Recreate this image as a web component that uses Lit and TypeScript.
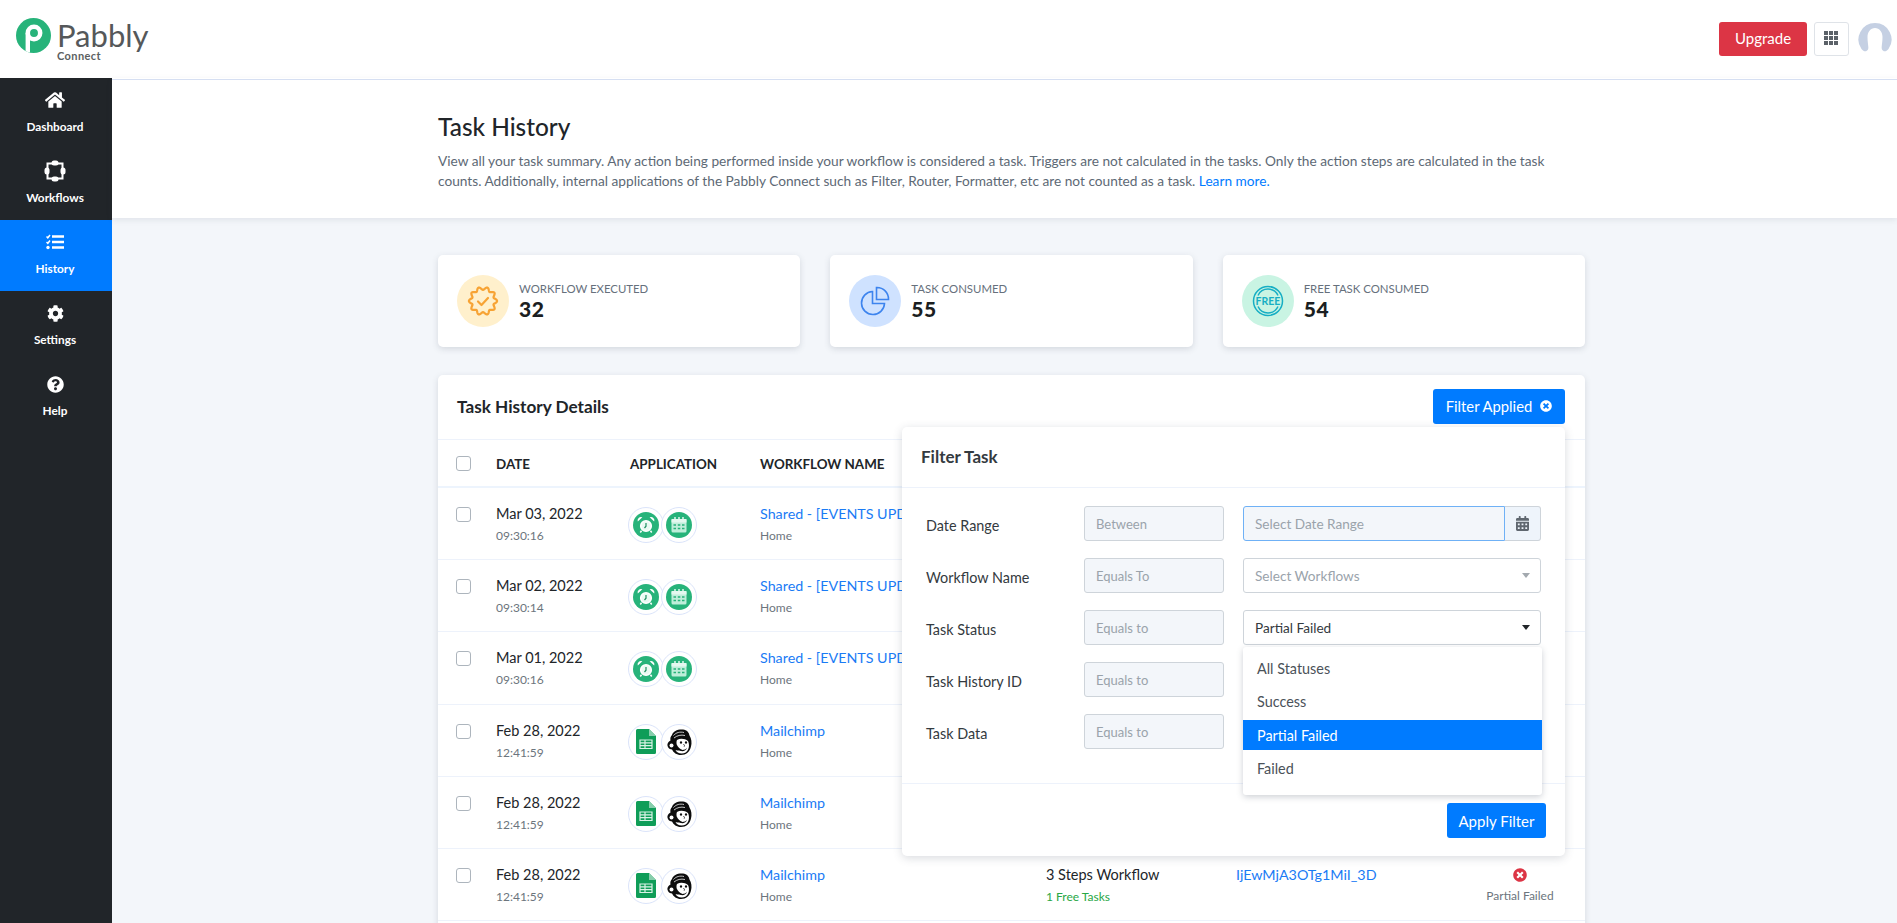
import { LitElement, html, css, svg } from 'lit';
import { customElement } from 'lit/decorators.js';

// font awesome style glyphs
const HOME = 'M280.37 148.26L96 300.11V464a16 16 0 0 0 16 16l112.06-.29a16 16 0 0 0 15.92-16V368a16 16 0 0 1 16-16h64a16 16 0 0 1 16 16v95.64a16 16 0 0 0 16 16.05L464 480a16 16 0 0 0 16-16V300L295.67 148.26a12.19 12.19 0 0 0-15.3 0zM571.6 251.47L488 182.56V44.05a12 12 0 0 0-12-12h-56a12 12 0 0 0-12 12v72.61L318.47 43a48 48 0 0 0-61 0L4.34 251.47a12 12 0 0 0-1.6 16.9l25.5 31A12 12 0 0 0 45.15 301l235.22-193.74a12.19 12.19 0 0 1 15.3 0L530.9 301a12 12 0 0 0 16.9-1.6l25.5-31a12 12 0 0 0-1.7-16.93z';
const COG = 'M487.4 315.7l-42.6-24.6c4.3-23.2 4.3-47 0-70.2l42.6-24.6c4.9-2.8 7.1-8.6 5.5-14-11.1-35.6-30-67.8-54.7-94.6-3.8-4.1-10-5.1-14.8-2.3L380.8 110c-17.9-15.4-38.5-27.3-60.8-35.1V25.8c0-5.6-3.9-10.5-9.4-11.7-36.7-8.2-74.3-7.8-109.2 0-5.5 1.2-9.4 6.1-9.4 11.7V75c-22.2 7.9-42.8 19.8-60.8 35.1L88.7 85.5c-4.9-2.8-11-1.9-14.8 2.3-24.7 26.7-43.6 58.9-54.7 94.6-1.7 5.4.6 11.2 5.5 14L67.3 221c-4.3 23.2-4.3 47 0 70.2l-42.6 24.6c-4.9 2.8-7.1 8.6-5.5 14 11.1 35.6 30 67.8 54.7 94.6 3.8 4.1 10 5.1 14.8 2.3l42.6-24.6c17.9 15.4 38.5 27.3 60.8 35.1v49.2c0 5.6 3.9 10.5 9.4 11.7 36.7 8.2 74.3 7.8 109.2 0 5.5-1.2 9.4-6.1 9.4-11.7v-49.2c22.2-7.9 42.8-19.8 60.8-35.1l42.6 24.6c4.9 2.8 11 1.9 14.8-2.3 24.7-26.7 43.6-58.9 54.7-94.6 1.5-5.5-.7-11.3-5.6-14.1zM256 336c-44.1 0-80-35.9-80-80s35.9-80 80-80 80 35.9 80 80-35.9 80-80 80z';
const QUESTION = 'M504 256c0 136.997-111.043 248-248 248S8 392.997 8 256C8 119.083 119.043 8 256 8s248 111.083 248 248zM262.655 90c-54.497 0-89.255 22.957-116.549 63.758-3.536 5.286-2.353 12.415 2.715 16.258l34.699 26.31c5.205 3.947 12.621 3.008 16.665-2.122 17.864-22.658 30.113-35.797 57.303-35.797 20.429 0 45.698 13.148 45.698 32.958 0 14.976-12.363 22.667-32.534 33.976C247.128 238.528 216 254.941 216 296v4c0 6.627 5.373 12 12 12h56c6.627 0 12-5.373 12-12v-1.333c0-28.462 83.186-29.647 83.186-106.667 0-58.002-60.165-102-116.531-102zM256 338c-25.365 0-46 20.635-46 46 0 25.364 20.635 46 46 46s46-20.636 46-46c0-25.365-20.635-46-46-46z';
const TIMES = 'M256 8C119 8 8 119 8 256s111 248 248 248 248-111 248-248S393 8 256 8zm121.6 313.1c4.7 4.7 4.7 12.3 0 17L338 377.6c-4.7 4.7-12.3 4.7-17 0L256 312l-65.1 65.6c-4.7 4.7-12.3 4.7-17 0L134.4 338c-4.7-4.7-4.7-12.3 0-17l65.6-65-65.6-65.1c-4.7-4.7-4.7-12.3 0-17l39.6-39.6c4.7-4.7 12.3-4.7 17 0l65 65.7 65.1-65.6c4.7-4.7 12.3-4.7 17 0l39.6 39.6c4.7 4.7 4.7 12.3 0 17L312 256l65.6 65.1z';
const CALENDAR = 'M0 464c0 26.5 21.5 48 48 48h352c26.5 0 48-21.5 48-48V192H0v272zm320-196c0-6.6 5.4-12 12-12h40c6.6 0 12 5.4 12 12v40c0 6.6-5.4 12-12 12h-40c-6.6 0-12-5.4-12-12v-40zm0 128c0-6.6 5.4-12 12-12h40c6.6 0 12 5.4 12 12v40c0 6.6-5.4 12-12 12h-40c-6.6 0-12-5.4-12-12v-40zM192 268c0-6.6 5.4-12 12-12h40c6.6 0 12 5.4 12 12v40c0 6.6-5.4 12-12 12h-40c-6.6 0-12-5.4-12-12v-40zm0 128c0-6.6 5.4-12 12-12h40c6.6 0 12 5.4 12 12v40c0 6.6-5.4 12-12 12h-40c-6.6 0-12-5.4-12-12v-40zM64 268c0-6.6 5.4-12 12-12h40c6.6 0 12 5.4 12 12v40c0 6.6-5.4 12-12 12H76c-6.6 0-12-5.4-12-12v-40zm0 128c0-6.6 5.4-12 12-12h40c6.6 0 12 5.4 12 12v40c0 6.6-5.4 12-12 12H76c-6.6 0-12-5.4-12-12v-40zM400 64h-48V16c0-8.8-7.2-16-16-16h-32c-8.8 0-16 7.2-16 16v48H160V16c0-8.8-7.2-16-16-16h-32c-8.8 0-16 7.2-16 16v48H48C21.5 64 0 85.5 0 112v48h448v-48c0-26.5-21.5-48-48-48z';

const navIcon = (name: string) => {
  if (name === 'Dashboard') return html`<svg width="20" height="18" viewBox="0 0 576 512" fill="#fff"><path d=${HOME}></path></svg>`;
  if (name === 'Workflows') return html`<svg width="22" height="22" viewBox="0 0 22 22"><rect x="3.500" y="3.500" width="15" height="15" fill="none" stroke="#fff" stroke-width="2"></rect><rect x="7.500" y="0.500" width="7" height="5" rx="2.500" fill="#fff"></rect><rect x="7.500" y="16.500" width="7" height="5" rx="2.500" fill="#fff"></rect><rect x="0.500" y="7.500" width="5" height="7" rx="2.500" fill="#fff"></rect><rect x="16.500" y="7.500" width="5" height="7" rx="2.500" fill="#fff"></rect></svg>`;
  if (name === 'History') return html`<svg width="18" height="16" viewBox="0 0 18 16" fill="none" stroke="#fff"><path d="M6 2.500h12M6 8h12M6 13.500h12" stroke-width="2.400"></path><path d="M0.500 2.500l1.300 1.300L4 1M0.500 8l1.300 1.300L4 6.500" stroke-width="1.500"></path><circle cx="2" cy="13.500" r="1.700" fill="#fff" stroke="none"></circle></svg>`;
  if (name === 'Settings') return html`<svg width="17" height="17" viewBox="0 0 512 512" fill="#fff"><path d=${COG}></path></svg>`;
  return html`<svg width="17" height="17" viewBox="0 0 512 512" fill="#fff"><path d=${QUESTION}></path></svg>`;
};

const alarmIcon = html`<span class="app-green"><svg width="20" height="20" viewBox="0 0 20 20" fill="none"><circle cx="10" cy="11" r="5.300" fill="#eafaf3" stroke="#fff" stroke-width="1.600"></circle><path d="M10 8v3.200l-1.500 1.800" stroke="#1f8f62" stroke-width="1.200"></path><path d="M1.800 6.600A3.400 3.400 0 0 1 6.400 2.300zM18.200 6.600a3.400 3.400 0 0 0-4.600-4.300z" fill="#fff"></path><path d="M5.500 15.800l-1.200 1.700M14.500 15.800l1.200 1.700" stroke="#fff" stroke-width="1.500"></path></svg></span>`;
const calIcon = html`<span class="app-green"><svg width="18" height="18" viewBox="0 0 18 18"><rect x="1.500" y="3" width="15" height="13.500" rx="1.500" fill="#bfeeda"></rect><rect x="1.500" y="3" width="15" height="3.500" fill="#e4f8ef"></rect><path d="M5 1v3.500M9 1v3.500M13 1v3.500" stroke="#e4f8ef" stroke-width="1.500"></path><path d="M3.500 9h2.500M7.800 9h2.500M12 9h2.500M3.500 12.500h2.500M7.800 12.500h2.500M12 12.500h2.500" stroke="#27b37a" stroke-width="1.700"></path></svg></span>`;
const sheetsIcon = html`<svg width="20" height="25" viewBox="0 0 20 25"><path d="M1.500 0H13l7 7v16.500a1.500 1.500 0 0 1-1.500 1.500h-17A1.500 1.500 0 0 1 0 23.500v-22A1.500 1.500 0 0 1 1.500 0z" fill="#0f9d58"></path><path d="M13 0l7 7h-7z" fill="#87ceac"></path><path d="M4 11h12v8.500H4z M4 13.800h12 M4 16.700h12 M9 11v8.500" fill="none" stroke="#d9f2e5" stroke-width="1.200"></path></svg>`;
const chimpIcon = html`<svg width="25" height="26" viewBox="0 0 25 26"><path d="M5 6C6 2 11 0 16 .5c4 .5 6 3 6.500 6 2 3 2.500 7.500 1.500 11-1 5-5 8.500-10 8.500-4.500 0-7.500-2.500-9-5.500-3 0-5-3-4.500-5.500C1 13 2.500 12 3.500 11.500 3 9.500 3.500 7.500 5 6z" fill="#0d0d0d"></path><path d="M6.500 6.500C9 3.500 13 2.500 17 3.500M7 9c3-2.500 7-3.500 11-2.500" stroke="#f3f3f3" stroke-width=".8" fill="none"></path><path d="M10 11c3-1.800 8-1.500 11 1 1.300 2.500 1.300 6 .3 8-1 3-3.700 4.500-6.800 4.500-2.800 0-5-1.500-6-3.500 2 .8 5 .8 7 0-2-.8-5-3-5.800-5.500-.3-1.700-.3-3.200.3-4.500z" fill="#fff"></path><ellipse cx="14" cy="13.500" rx="1.100" ry="1.300" fill="#0d0d0d"></ellipse><ellipse cx="19" cy="13.500" rx="1.100" ry="1.300" fill="#0d0d0d"></ellipse><path d="M11.500 20c3 1.500 6.500 1.300 8.500-1.200-1 3.700-6.500 4.700-8.500 1.200z" fill="#0d0d0d"></path><path d="M16.300 15c1 1 1.700 1.800.8 2.700" stroke="#0d0d0d" fill="none" stroke-width=".8"></path><circle cx="4.500" cy="16.500" r="2" fill="#fff"></circle></svg>`;

// the wavy badge on the first stat card
const badgePath = () => {
  const pts: string[] = [];
  for (let i = 0; i < 120; i++) {
    const a = (i / 120) * Math.PI * 2;
    const r = 12.6 + 1.5 * Math.cos(a * 10);
    pts.push(`${(16 + r * Math.cos(a)).toFixed(2)},${(16 + r * Math.sin(a)).toFixed(2)}`);
  }
  return `M${pts.join('L')}Z`;
};

const NAV = ['Dashboard', 'Workflows', 'History', 'Settings', 'Help'];

const ROWS = [
  { date: 'Mar 03, 2022', time: '09:30:16', name: 'Shared - [EVENTS UPDATE]', apps: 'sched' },
  { date: 'Mar 02, 2022', time: '09:30:14', name: 'Shared - [EVENTS UPDATE]', apps: 'sched' },
  { date: 'Mar 01, 2022', time: '09:30:16', name: 'Shared - [EVENTS UPDATE]', apps: 'sched' },
  { date: 'Feb 28, 2022', time: '12:41:59', name: 'Mailchimp', apps: 'chimp' },
  { date: 'Feb 28, 2022', time: '12:41:59', name: 'Mailchimp', apps: 'chimp' },
  { date: 'Feb 28, 2022', time: '12:41:59', name: 'Mailchimp', apps: 'chimp', steps: '3 Steps Workflow', free: '1 Free Tasks', id: 'IjEwMjA3OTg1MiI_3D', status: 'Partial Failed' },
];

const FIELDS = [
  { label: 'Date Range', op: 'Between' },
  { label: 'Workflow Name', op: 'Equals To' },
  { label: 'Task Status', op: 'Equals to' },
  { label: 'Task History ID', op: 'Equals to' },
  { label: 'Task Data', op: 'Equals to' },
];

@customElement('app-root')
export class AppRoot extends LitElement {
  static styles = css`
    :host {
      display: block;
      height: 923px;
      overflow: hidden;
      font-family: 'Lato', 'Liberation Sans', sans-serif;
      color: #212529;
      background: #f3f6fa;
    }
    * { box-sizing: border-box; }

    /* Top bar */
    .topbar {
      height: 78px;
      background: #fff;
      display: flex;
      align-items: center;
      justify-content: space-between;
      padding: 0 5px 1px 16px;
    }
    .logo { display: flex; align-items: flex-start; gap: 6px; }
    .logo-mark { margin-top: 1.5px; }
    .logo-words { display: flex; flex-direction: column; }
    .logo-name { font-size: 31px; line-height: 30px; margin-top: 3.5px; color: #55585a; }
    .logo-sub { font-size: 11px; font-weight: 700; line-height: 11px; margin-top: -0.5px; color: #5c5f61; letter-spacing: 0.4px; }
    .top-actions { display: flex; align-items: center; gap: 7px; }
    .upgrade {
      width: 88px;
      height: 34px;
      padding-bottom: 1px;
      border-radius: 3px;
      background: #dc3545;
      color: #fff;
      font-size: 15px;
      display: flex;
      align-items: center;
      justify-content: center;
    }
    .apps {
      width: 35px;
      height: 34px;
      border: 1px solid #dfe3e8;
      border-radius: 3px;
      display: flex;
      align-items: center;
      justify-content: center;
    }
    .avatar { margin-left: 2px; display: block; }

    .body { display: flex; height: 845px; }

    /* Sidebar */
    .sidebar { width: 112px; flex: none; background: #212529; }
    .nav-item {
      height: 71px;
      display: flex;
      flex-direction: column;
      align-items: center;
      color: #fff;
      font-size: 11.8px;
      font-weight: 700;
      padding: 11px 2px 0 0;
    }
    .nav-item.active { background: #007bff; }
    .nav-icon { height: 22px; display: flex; align-items: center; justify-content: center; }
    .nav-label { margin-top: 9px; line-height: 14px; }

    /* Main column */
    .main { flex: 1; min-width: 0; }
    .page-head {
      height: 140px;
      background: linear-gradient(#fff 1px, #d6dff2 1px, #d6dff2 2px, #fff 2px);
      box-shadow: 0 2px 6px rgba(60, 70, 90, 0.1);
      padding: 34px 0 0 326px;
    }
    h1 { margin: 0; font-size: 24.4px; font-weight: 500; line-height: 29px; color: #212529; }
    .page-head p {
      margin: 10px 0 0;
      width: 1147px;
      font-size: 13.7px;
      line-height: 20px;
      color: #5d6975;
    }
    .page-head a { color: #007bff; font-weight: 400; }
    .content { width: 1147px; margin-left: 326px; padding-top: 37px; }

    /* Stat cards */
    .stats { display: grid; grid-template-columns: repeat(3, 1fr); gap: 30px; }
    .stat {
      height: 92px;
      background: #fff;
      border-radius: 5px;
      box-shadow: 0 2px 6px rgba(60, 70, 90, 0.17);
      display: flex;
      align-items: center;
      gap: 10px;
      padding-left: 19px;
    }
    .stat-icon { width: 52px; height: 52px; border-radius: 50%; display: flex; align-items: center; justify-content: center; }
    .stat-title { font-size: 11.4px; line-height: 14px; color: #66707c; }
    .stat-value { font-size: 21px; font-weight: 900; line-height: 25px; letter-spacing: 0.6px; color: #1b1e21; }

    /* Table card, runs on past the bottom of the window */
    .card {
      position: relative;
      margin-top: 28px;
      min-height: 600px;
      background: #fff;
      border-radius: 5px;
      box-shadow: 0 2px 6px rgba(60, 70, 90, 0.17);
    }
    .card-head {
      height: 64px;
      display: flex;
      align-items: center;
      justify-content: space-between;
      padding: 0 20px 2px 19px;
    }
    h2 { margin: 0; font-size: 17.2px; font-weight: 700; color: #212529; }
    .filter-btn {
      height: 35px;
      width: 132px;
      border-radius: 3px;
      background: #007bff;
      color: #fff;
      font-size: 14.8px;
      display: flex;
      align-items: center;
      justify-content: center;
      gap: 8px;
    }
    .row {
      display: grid;
      grid-template-columns: 40px 134px 130px 286px 190px 241px 1fr;
      padding-left: 18px;
      height: 72.2px;
      border-bottom: 1px solid #edf2fb;
    }
    .row.head {
      height: 49px;
      padding-top: 1px;
      align-items: center;
      border-top: 1px solid #edf2fb;
      border-bottom: 2px solid #edf4fd;
      font-size: 13.4px;
      font-weight: 700;
      color: #212529;
    }
    .check { width: 15px; height: 15px; border: 1px solid #adb5bd; border-radius: 3px; background: #fff; }
    .row:not(.head) .check { margin-top: 19px; }
    .cell { padding-top: 16px; }
    .main-text { font-size: 14.5px; line-height: 20px; color: #212529; }
    .sub-text { font-size: 12px; line-height: 16px; margin-top: 4px; color: #6c757d; }
    .main-text.link { color: #1a7bf5; font-size: 14.3px; }
    .green { color: #28a745; }
    .app-icons { display: flex; margin: 3px 0 0 -2px; }
    .app-icon {
      width: 36px;
      height: 36px;
      border-radius: 50%;
      border: 1px solid #dbe4fa;
      background: #fff;
      display: flex;
      align-items: center;
      justify-content: center;
    }
    .app-icon + .app-icon { margin-left: -3px; }
    .app-green {
      width: 26px;
      height: 26px;
      border-radius: 50%;
      background: #27b37a;
      display: flex;
      align-items: center;
      justify-content: center;
    }
    .status { text-align: center; padding-top: 19px; width: 86px; }
    .status svg { display: block; margin: 0 auto 6px; }
    .status .sub-text { margin-top: 0; }

    /* Filter popover */
    .popover {
      position: absolute;
      top: 52px;
      right: 20px;
      width: 663px;
      height: 429px;
      background: #fff;
      border-radius: 5px;
      box-shadow: 0 2px 10px rgba(60, 70, 90, 0.2);
      z-index: 2;
    }
    .pop-head {
      height: 61px;
      padding: 0 19px 2px;
      display: flex;
      align-items: center;
      font-size: 17px;
      font-weight: 700;
      color: #343a40;
      border-bottom: 1px solid #edf2fb;
    }
    .pop-body {
      height: 296px;
      padding: 18px 0 0 24px;
      display: flex;
      flex-direction: column;
      gap: 17px;
      border-bottom: 1px solid #edf2fb;
    }
    .field { display: grid; grid-template-columns: 158px 140px 317px; height: 35px; align-items: center; }
    .field label { font-size: 14.4px; color: #343a40; padding-top: 3px; }
    .control {
      height: 35px;
      border: 1px solid #ced4da;
      border-radius: 3px;
      font-size: 13.6px;
      color: #9aa3ab;
      display: flex;
      align-items: center;
      padding-left: 11px;
      background: #fff;
    }
    .control.op { background: #f3f6fa; font-size: 13px; }
    .value { margin-left: 19px; justify-content: space-between; padding-right: 10px; }
    .value.picked { color: #343a40; }
    .date-group { margin-left: 19px; height: 35px; display: flex; }
    .date-input {
      flex: 1;
      display: flex;
      align-items: center;
      padding-left: 11px;
      font-size: 13.6px;
      color: #9aa3ab;
      background: #f3f6fa;
      border: 1px solid #6fb1f6;
      border-radius: 3px 0 0 3px;
    }
    .date-addon {
      width: 36px;
      display: flex;
      align-items: center;
      justify-content: center;
      background: #eef4fb;
      border: 1px solid #ced4da;
      border-left: 0;
      border-radius: 0 3px 3px 0;
    }
    .caret { width: 0; height: 0; border: 4.5px solid transparent; border-top: 5px solid #a3a9af; border-bottom: 0; }
    .caret.dark { border-top-color: #212529; }
    .pop-foot { display: flex; justify-content: flex-end; padding: 19px 19px 0 0; }
    .apply {
      width: 99px;
      height: 35px;
      border-radius: 3px;
      background: #007bff;
      color: #fff;
      font-size: 15px;
      display: flex;
      align-items: center;
      justify-content: center;
    }
    .menu {
      position: absolute;
      top: 220px;
      left: 341px;
      width: 299px;
      height: 148px;
      padding-top: 6px;
      background: #fff;
      border-radius: 3px;
      box-shadow: 0 2px 6px rgba(60, 70, 90, 0.25);
      display: flex;
      flex-direction: column;
      gap: 3.5px;
      z-index: 3;
    }
    .menu-item { height: 30px; padding-left: 14px; display: flex; align-items: center; font-size: 14.4px; color: #4b5259; }
    .menu-item.selected { background: #007bff; color: #fff; }
  `;

  private renderApps(kind: string) {
    if (kind === 'sched') {
      return html`<div class="app-icon">${alarmIcon}</div><div class="app-icon">${calIcon}</div>`;
    }
    return html`<div class="app-icon">${sheetsIcon}</div><div class="app-icon">${chimpIcon}</div>`;
  }

  private renderRow(r: any) {
    return html`
      <div class="row">
        <div class="check"></div>
        <div class="cell">
          <div class="main-text">${r.date}</div>
          <div class="sub-text">${r.time}</div>
        </div>
        <div class="cell"><div class="app-icons">${this.renderApps(r.apps)}</div></div>
        <div class="cell">
          <div class="main-text link">${r.name}</div>
          <div class="sub-text">Home</div>
        </div>
        <div class="cell">
          <div class="main-text">${r.steps}</div>
          <div class="sub-text green">${r.free}</div>
        </div>
        <div class="cell"><div class="main-text link">${r.id}</div></div>
        ${r.status
          ? html`<div class="status">
              <svg width="14" height="14" viewBox="0 0 512 512" fill="#dc3545"><path d=${TIMES}></path></svg>
              <div class="sub-text">${r.status}</div>
            </div>`
          : ''}
      </div>
    `;
  }

  private renderControl(i: number) {
    if (i === 0) {
      return html`<div class="date-group">
        <div class="date-input">Select Date Range</div>
        <div class="date-addon"><svg width="13" height="15" viewBox="0 0 448 512" fill="#5f6770"><path d=${CALENDAR}></path></svg></div>
      </div>`;
    }
    if (i === 1) return html`<div class="control value">Select Workflows <span class="caret"></span></div>`;
    if (i === 2) return html`<div class="control value picked">Partial Failed <span class="caret dark"></span></div>`;
    return '';
  }

  render() {
    return html`
      <div class="topbar">
        <div class="logo">
          <svg class="logo-mark" width="35" height="35" viewBox="0 0 35 35">
            <circle cx="17.500" cy="17.500" r="17.500" fill="#27b37a"></circle>
            <circle cx="18" cy="15" r="6.200" fill="none" stroke="#fff" stroke-width="4.500"></circle>
            <path d="M9.600 15h4.400v19.600a17 17 0 0 1-4.400-1.400z" fill="#fff"></path>
          </svg>
          <div class="logo-words">
            <span class="logo-name">Pabbly</span>
            <span class="logo-sub">Connect</span>
          </div>
        </div>
        <div class="top-actions">
          <div class="upgrade">Upgrade</div>
          <div class="apps">
            <svg width="15" height="15" viewBox="0 0 15 15" fill="#5b6168">
              ${[0, 5, 10].flatMap((y) => [0, 5, 10].map((x) => svg`<rect x=${x} y=${y} width="4" height="4"></rect>`))}
            </svg>
          </div>
          <svg class="avatar" width="34" height="34" viewBox="0 0 34 34">
            <path d="M17 1a16.500 16.500 0 0 1 13.500 26C28 30 25.500 30 24 27.500 23 25 24.500 22 24.500 15 24.500 10 21.500 6 17 6s-7.500 4-7.500 9c0 7 1.500 10 .5 12.500C8.500 30 6 30 3.500 27A16.500 16.500 0 0 1 17 1z" fill="#c5d0e3"></path>
          </svg>
        </div>
      </div>

      <div class="body">
        <nav class="sidebar">
          ${NAV.map(
            (n) => html`
              <div class="nav-item ${n === 'History' ? 'active' : ''}">
                <div class="nav-icon">${navIcon(n)}</div>
                <div class="nav-label">${n}</div>
              </div>
            `
          )}
        </nav>

        <div class="main">
          <div class="page-head">
            <h1>Task History</h1>
            <p>
              View all your task summary. Any action being performed inside your workflow is considered a task. Triggers are not calculated in the tasks. Only the action steps are calculated in the task counts. Additionally, internal applications of the Pabbly Connect such as Filter, Router, Formatter, etc are not counted as a task.
              <a>Learn more.</a>
            </p>
          </div>

          <div class="content">
            <div class="stats">
              <div class="stat">
                <div class="stat-icon" style="background:#fff0cc">
                  <svg width="32" height="32" viewBox="0 0 32 32" fill="none" stroke="#f7a334" stroke-width="2.200">
                    <path d=${badgePath()}></path>
                    <path d="M11 16.500l3.500 3.500 6.500-7" stroke-linecap="round" stroke-linejoin="round"></path>
                  </svg>
                </div>
                <div>
                  <div class="stat-title">WORKFLOW EXECUTED</div>
                  <div class="stat-value">32</div>
                </div>
              </div>
              <div class="stat">
                <div class="stat-icon" style="background:#cfe2ff">
                  <svg width="30" height="30" viewBox="0 0 30 30" fill="none" stroke="#3d84ee" stroke-width="1.600">
                    <path d="M12.500 5.500a11.500 11.500 0 1 0 12 12H12.500z"></path>
                    <path d="M16.500 1.500a11.500 11.500 0 0 1 12 12h-12z"></path>
                  </svg>
                </div>
                <div>
                  <div class="stat-title">TASK CONSUMED</div>
                  <div class="stat-value">55</div>
                </div>
              </div>
              <div class="stat">
                <div class="stat-icon" style="background:#c9f4e3">
                  <svg width="32" height="32" viewBox="0 0 32 32" fill="none" stroke="#16aec4" stroke-width="1.500">
                    <circle cx="16" cy="16" r="14.500"></circle>
                    <path d="M6 10.500a11 11 0 0 1 20 0M6 21.500a11 11 0 0 0 20 0"></path>
                    <text x="16" y="20" text-anchor="middle" font-size="10.500" font-weight="700" fill="#16aec4" stroke="none">FREE</text>
                  </svg>
                </div>
                <div>
                  <div class="stat-title">FREE TASK CONSUMED</div>
                  <div class="stat-value">54</div>
                </div>
              </div>
            </div>

            <div class="card">
              <div class="card-head">
                <h2>Task History Details</h2>
                <div class="filter-btn">
                  Filter Applied
                  <svg width="12" height="12" viewBox="0 0 512 512" fill="#fff"><path d=${TIMES}></path></svg>
                </div>
              </div>
              <div class="row head">
                <div class="check"></div>
                <div>DATE</div>
                <div>APPLICATION</div>
                <div>WORKFLOW NAME</div>
              </div>
              ${ROWS.map((r) => this.renderRow(r))}

              <div class="popover">
                <div class="pop-head">Filter Task</div>
                <div class="pop-body">
                  ${FIELDS.map(
                    (f, i) => html`
                      <div class="field">
                        <label>${f.label}</label>
                        <div class="control op">${f.op}</div>
                        ${this.renderControl(i)}
                      </div>
                    `
                  )}
                </div>
                <div class="pop-foot"><div class="apply">Apply Filter</div></div>
                <div class="menu">
                  <div class="menu-item">All Statuses</div>
                  <div class="menu-item">Success</div>
                  <div class="menu-item selected">Partial Failed</div>
                  <div class="menu-item">Failed</div>
                </div>
              </div>
            </div>
          </div>
        </div>
      </div>
    `;
  }
}
